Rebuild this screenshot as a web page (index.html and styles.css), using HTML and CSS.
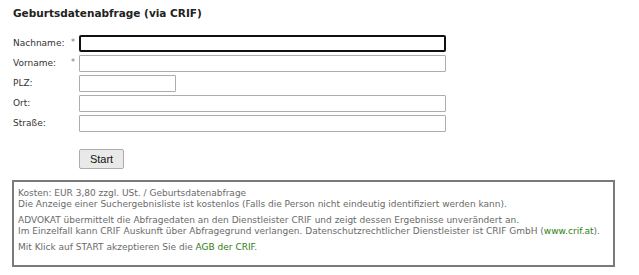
FILE: index.html
```html
<!DOCTYPE html>
<html lang="de">
<head>
  <meta charset="UTF-8">
  <title>Geburtsdatenabfrage (via CRIF)</title>
  <link rel="stylesheet" href="styles.css">
</head>
<body>
<h2>Geburtsdatenabfrage (via CRIF)</h2>

<form class="query-form" onsubmit="return false;">
  <div class="row">
    <label for="nachname">Nachname:</label>
    <span class="req">*</span>
    <input type="text" id="nachname" class="focused">
  </div>
  <div class="row">
    <label for="vorname">Vorname:</label>
    <span class="req">*</span>
    <input type="text" id="vorname">
  </div>
  <div class="row">
    <label for="plz">PLZ:</label>
    <span class="req"></span>
    <input type="text" id="plz" class="short">
  </div>
  <div class="row">
    <label for="ort">Ort:</label>
    <span class="req"></span>
    <input type="text" id="ort">
  </div>
  <div class="row">
    <label for="strasse">Straße:</label>
    <span class="req"></span>
    <input type="text" id="strasse">
  </div>
  <div class="btn-row">
    <button type="submit">Start</button>
  </div>
</form>

<div class="info-box">
  <p>Kosten: EUR 3,80 zzgl. USt. / Geburtsdatenabfrage<br>
  Die Anzeige einer Suchergebnisliste ist kostenlos (Falls die Person nicht eindeutig identifiziert werden kann).</p>
  <p>ADVOKAT übermittelt die Abfragedaten an den Dienstleister CRIF und zeigt dessen Ergebnisse unverändert an.<br>
  Im Einzelfall kann CRIF Auskunft über Abfragegrund verlangen. Datenschutzrechtlicher Dienstleister ist CRIF GmbH (<a href="#">www.crif.at</a>).</p>
  <p>Mit Klick auf START akzeptieren Sie die <a href="#">AGB der CRIF</a>.</p>
</div>

</body>
</html>
```

FILE: styles.css
```css
body {
  font-family: "DejaVu Sans", Verdana, sans-serif;
  font-size: 9px;
  margin: 0;
  padding: 0 12px;
  background-color: #fff;
  color: #333;
}

h2 {
  font-size: 10.5px;
  font-weight: bold;
  color: #222;
  margin: 0;
  padding: 7px 0 0 1px;
  height: 33px;
  box-sizing: border-box;
}

.query-form {
  margin: 0;
}

.row {
  display: flex;
  align-items: center;
  height: 20px;
}

.row label {
  width: 58px;
  padding-left: 1px;
}

.req {
  width: 8px;
  color: #777;
  font-size: 8px;
  align-self: flex-start;
  padding-top: 5px;
}

.row input {
  width: 367px;
  height: 17px;
  box-sizing: border-box;
  border: 1px solid #adadad;
  border-radius: 1px;
  padding: 0 3px;
  margin: 0;
  font-size: 9px;
}

.row input.short {
  width: 97px;
}

.row input.focused {
  border: 2px solid #111;
  border-radius: 2px;
}

.btn-row {
  padding: 16px 0 0 67px;
  height: 47px;
  box-sizing: border-box;
}

button {
  font-family: "Liberation Sans", Arial, sans-serif;
  font-size: 11px;
  width: 45px;
  height: 20px;
  padding: 0;
  background-color: #e9e9e9;
  border: 1px solid #adadad;
  border-radius: 2px;
  color: #111;
}

.info-box {
  border: 2px solid #7a7a7a;
  width: 603px;
  height: 87px;
  box-sizing: border-box;
  padding: 6px 4px 4px;
  color: #6a6a6a;
  line-height: 10.5px;
}

.info-box p {
  margin: 0 0 6px 0;
}

.info-box a {
  color: #2e7d12;
  text-decoration: none;
}
```
